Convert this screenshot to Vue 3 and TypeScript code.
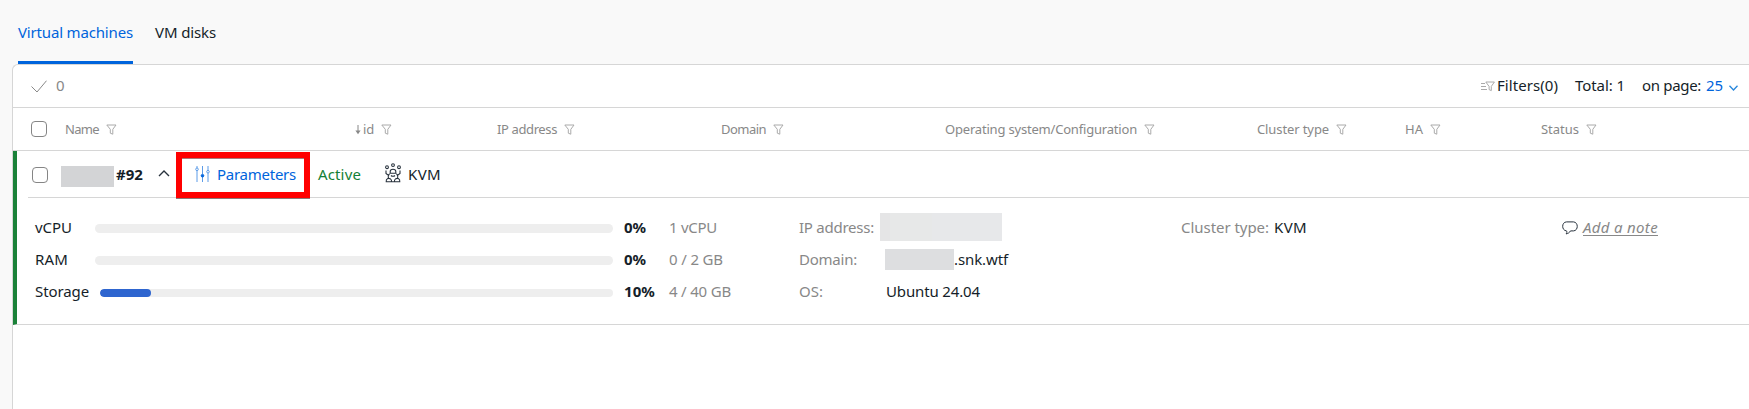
<script setup lang="ts">
interface Column { label: string; start: number; width: number; sorted?: boolean }
interface Meter { label: string; labelWidth: number; percent: number; percentWidth: number; usage: string; usageWidth: number; long?: boolean }

const columns: Column[] = [
  { label: 'Name', start: 65, width: 34 },
  { label: 'id', start: 355, width: 11, sorted: true },
  { label: 'IP address', start: 497, width: 60 },
  { label: 'Domain', start: 721, width: 45 },
  { label: 'Operating system/Configuration', start: 945, width: 192 },
  { label: 'Cluster type', start: 1257, width: 72 },
  { label: 'HA', start: 1405, width: 18 },
  { label: 'Status', start: 1541, width: 38 },
]
const gridColumns = columns
  .map((c, i) => (i < columns.length - 1 ? `${columns[i + 1].start - c.start}px` : '1fr'))
  .join(' ')

const meters: Meter[] = [
  { label: 'vCPU', labelWidth: 37, percent: 0, percentWidth: 22, usage: '1 vCPU', usageWidth: 48 },
  { label: 'RAM', labelWidth: 33, percent: 0, percentWidth: 22, usage: '0 / 2 GB', usageWidth: 54 },
  { label: 'Storage', labelWidth: 54, percent: 10, percentWidth: 31, usage: '4 / 40 GB', usageWidth: 62, long: true },
]

// Tracks a label so that it fills the given width in pixels.
const vFit = {
  mounted(el: HTMLElement, binding: { value: number }) {
    const count = (el.textContent ?? '').trim().length
    const natural = el.getBoundingClientRect().width
    el.style.letterSpacing = `${((binding.value - natural) / count).toFixed(3)}px`
  },
}
</script>

<template>
  <div class="page">
    <nav class="tabs">
      <a class="tab active"><span v-fit="115">Virtual machines</span></a>
      <a class="tab"><span v-fit="61">VM disks</span></a>
    </nav>

    <main class="panel">
      <div class="toolbar">
        <svg class="check" width="16" height="13" viewBox="0 0 16 13"><path d="M.5 6.5 6 12 15.5.7" /></svg>
        <span class="muted">0</span>
        <div class="tools">
          <svg class="filter-all" width="14" height="11" viewBox="0 0 14 11">
            <path d="M0 2.5h4M0 5.5h5M0 8.5h6M4.8 1h8.6L10.3 5.4v4.2l-2.2-1V5.4z" />
          </svg>
          <span v-fit="61" class="filters">Filters(0)</span>
          <span v-fit="50" class="total">Total: 1</span>
          <span v-fit="59" class="on-page">on page:</span>
          <span v-fit="17" class="link">25</span>
          <svg class="down" width="9" height="6" viewBox="0 0 9 6"><path d="M.5.8 4.5 5 8.5.8" /></svg>
        </div>
      </div>

      <div class="thead">
        <i class="box"></i>
        <div class="columns" :style="{ gridTemplateColumns: gridColumns }">
          <div v-for="c in columns" :key="c.label" class="column">
            <svg v-if="c.sorted" class="arrow" width="6" height="10" viewBox="0 0 6 10">
              <path d="M3 0v7" /><path class="head" d="M.4 5.5h5.2L3 9.2z" />
            </svg>
            <span v-fit="c.width">{{ c.label }}</span>
            <svg class="funnel" width="11" height="11" viewBox="0 0 11 11">
              <path d="M.8 1h9.2L6.8 5.3v4.9l-2.5-1V5.3z" />
            </svg>
          </div>
        </div>
      </div>

      <section class="machine">
        <div class="summary">
          <i class="box"></i>
          <span class="redacted name"></span>
          <b v-fit="27" class="number">#92</b>
          <svg class="up" width="12" height="7" viewBox="0 0 12 7"><path d="M1 6 6 1l5 5" /></svg>
          <a class="parameters">
            <svg width="15" height="16" viewBox="0 0 15 16">
              <path d="M2 5v11M2 0v2M7.5 0v8M7.5 11v5M13 7v9M13 0v4" />
              <circle cx="2" cy="3.3" r="1.3" /><circle class="dot" cx="7.5" cy="9.7" r="1.3" /><circle cx="13" cy="5.7" r="1.3" />
            </svg>
            <span v-fit="79">Parameters</span>
          </a>
          <span v-fit="43" class="status">Active</span>
          <svg class="kvm" width="16" height="20" viewBox="0 0 16 20">
            <circle cx="2" cy="4.2" r="1.4" /><circle cx="8" cy="2.1" r="1.4" /><circle cx="14" cy="4.2" r="1.4" />
            <path d="M5.2 10V8.5C5.2 5.5 10.8 5.5 10.8 8.5V10M5 10.2h6M1 7.5v3l3 2.2M15 7.5v3l-3 2.2M4.7 10.5c-2.5 3-1.5 4.5-.2 5.5M11.3 10.5c2.5 3 1.5 4.5.2 5.5M6 12.5c1 1 3 1 4 0M1.2 18.7C.8 15.5 4 14.2 6 16.5c.7 1 .8 2.2-.5 2.2zM14.8 18.7c.4-3.2-2.8-4.5-4.8-2.2-.7 1-.8 2.2.5 2.2zM6.5 18.7h3" />
          </svg>
          <span v-fit="33">KVM</span>
        </div>

        <div class="details">
          <div class="meters">
            <div v-for="m in meters" :key="m.label" class="line">
              <span class="meter-label" :class="{ long: m.long }"><span v-fit="m.labelWidth">{{ m.label }}</span></span>
              <div class="track" :class="{ long: m.long }"><div class="fill" :style="{ width: m.percent + '%' }"></div></div>
              <span class="percent"><b v-fit="m.percentWidth">{{ m.percent }}%</b></span>
              <span v-fit="m.usageWidth" class="muted">{{ m.usage }}</span>
            </div>
          </div>
          <div class="facts">
            <div class="line">
              <span class="fact-label ip"><span v-fit="75">IP address:</span></span>
              <span class="redacted address"></span>
            </div>
            <div class="line">
              <span class="fact-label"><span v-fit="58">Domain:</span></span>
              <span class="redacted domain"></span><span v-fit="54">.snk.wtf</span>
            </div>
            <div class="line">
              <span class="fact-label os"><span v-fit="24">OS:</span></span>
              <span v-fit="94">Ubuntu 24.04</span>
            </div>
          </div>
          <div class="line cluster">
            <span v-fit="88" class="muted">Cluster type:</span>
            <span v-fit="33">KVM</span>
          </div>
          <div class="line note">
            <svg width="16" height="14" viewBox="0 0 16 14">
              <path d="M4.5 9.9C-.6 9.5-.6 1.1 4.5.9h7c5 .3 5 8.7 0 9H8.5C7.5 11.7 6 12.6 4 12.9 5 12 5.1 11 4.5 9.9z" />
            </svg>
            <a v-fit="75">Add a note</a>
          </div>
        </div>
      </section>
    </main>
  </div>
</template>

<style>
body { margin: 0; overflow: hidden; }
</style>

<style scoped>
.page { box-sizing: border-box; height: 409px; width: 1749px; overflow: hidden; display: flex; flex-direction: column; background: #f9f9f9; color: #151e29; font: 15px/20px "Noto Sans", "Open Sans", sans-serif; white-space: nowrap; }
svg { display: block; flex: none; fill: none; stroke: #28323d; stroke-width: 1; }
.page span, .page b { flex: none; }
.muted { color: #888; }
.link { color: #0064dc; }

.tabs { display: flex; gap: 22px; height: 64px; flex: none; padding-left: 18px; }
.tab { box-sizing: border-box; height: 64px; padding-top: 22px; }
.tab.active { color: #0064dc; background: linear-gradient(#0064dc, #0064dc) bottom / 100% 3px no-repeat; }

.panel { flex: 1; margin-left: 12px; background: #fff; border: 1px solid #d6d6d6; border-width: 1px 0 0 1px; border-top-left-radius: 6px; }
.toolbar { display: flex; align-items: center; height: 42px; border-bottom: 1px solid #d6d6d6; padding: 0 11px 0 18px; }
.toolbar span { padding-bottom: 2px; }
.check { margin-right: 9px; stroke: #888; }
.tools { display: flex; align-items: center; margin-left: auto; }
.filter-all { stroke: #aaa; margin-right: 2px; }
.total { margin-left: 17px; }
.on-page { margin-left: 17px; }
.link { margin-left: 5px; }
.down { margin: 3px 0 0 6px; stroke: #2787dc; stroke-width: 1.3; }

.thead { display: flex; align-items: center; height: 42px; border-bottom: 1px solid #d6d6d6; padding-left: 18px; color: #888; font-size: 13px; }
.box { box-sizing: border-box; width: 16px; height: 16px; flex: none; border: 1px solid #858585; border-radius: 4px; background: #fff; }
.columns { display: grid; flex: 1; margin-left: 18px; }
.column { display: flex; align-items: center; }
.funnel { margin-left: 7px; stroke: #aaa; }
.arrow { margin: 1px 2px 0 0; stroke: #888; }
.arrow .head { fill: #888; stroke: none; }

.machine { box-sizing: border-box; height: 174px; border-left: 4px solid #1b8239; border-bottom: 1px solid #d6d6d6; }
.summary { display: flex; align-items: center; box-sizing: border-box; height: 47px; margin-left: 11px; padding: 0 0 1px 4px; border-bottom: 1px solid #d6d6d6; }
.summary .box { margin-top: 2px; }
.redacted { display: inline-block; background: #d3d4d6; }
.name { width: 53px; height: 21px; margin: 5px 0 0 13px; }
.number { margin-left: 2px; }
.up { margin: 0 0 0 15px; stroke-width: 1.4; }
.parameters { position: relative; display: flex; align-items: center; gap: 7px; margin-left: 25px; color: #0064dc; }
.parameters svg { stroke: #5c9ce8; }
.parameters .dot { fill: #0064dc; stroke: #0064dc; }
.parameters::after { content: ""; position: absolute; left: -19px; top: -12px; width: 122px; height: 34px; border: 6px solid #f00; box-shadow: 0 1px 0 #8c7777, inset 0 1px 0 #a77; }
.status { margin-left: 22px; color: #138036; }
.kvm { margin: 0 7px 1px 24px; stroke-width: 1.1; }

.details { display: flex; padding: 14px 0 0 18px; }
.line { display: flex; align-items: center; height: 32px; }
.line > span:not(.redacted) { padding-bottom: 2px; }
.meters { width: 764px; flex: none; }
.meter-label { width: 60px; }
.meter-label.long { width: 65px; }
.track { width: 518px; height: 9px; border-radius: 5px; background: #eee; overflow: hidden; }
.track.long { width: 513px; height: 8px; margin-top: 1px; }
.fill { height: 100%; border-radius: 4px; background: #2e65cf; }
.percent { width: 45px; margin-left: 11px; }
.facts { width: 382px; flex: none; }
.fact-label { width: 86px; color: #888; }
.fact-label.ip { width: 81px; }
.fact-label.os { width: 87px; }
.address { width: 122px; height: 28px; margin-top: -2px; background: linear-gradient(90deg, #e5e5e6 0 10px, #e7e8e8 10px 52px, #e7e8ea 52px); }
.domain { width: 69px; height: 21px; margin-top: -1px; background: #dddee0; }
.cluster { width: 381px; flex: none; gap: 5px; }
.note { gap: 5px; }
.note a { color: #888; font-style: italic; line-height: 16px; height: 16px; margin-bottom: 2px; border-bottom: 1px solid #888; }
</style>
